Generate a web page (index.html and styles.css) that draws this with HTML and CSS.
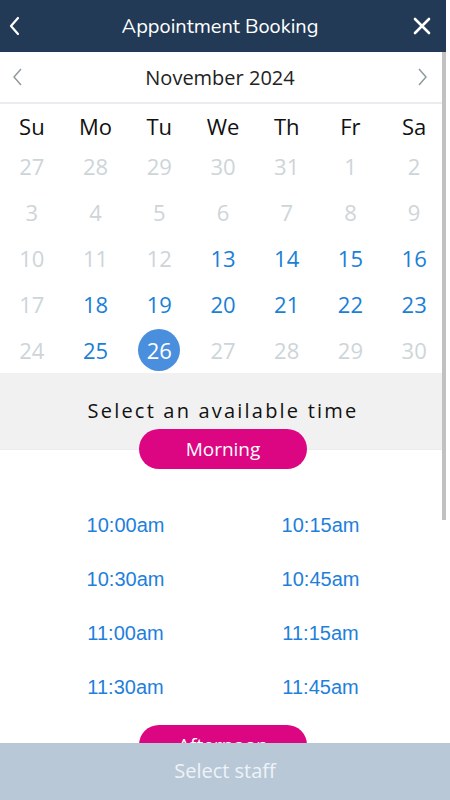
FILE: index.html
```html
<!DOCTYPE html>
<html lang="en">
<head>
    <meta charset="UTF-8">
    <meta name="viewport" content="width=device-width, initial-scale=1.0">
    <title>Appointment Booking</title>
    <link rel="stylesheet" href="styles.css">
</head>
<body>

<div class="app">
    <div class="topbar">
        <svg class="top-icon" width="14" height="20" viewBox="0 0 14 20"><path d="M10 2 L3 10 L10 18" fill="none" stroke="#fff" stroke-width="2.2" stroke-linecap="round" stroke-linejoin="round"/></svg>
        <h2>Appointment Booking</h2>
        <svg class="top-icon" width="20" height="20" viewBox="0 0 20 20"><path d="M3 3 L17 17 M17 3 L3 17" fill="none" stroke="#fff" stroke-width="2.6" stroke-linecap="round"/></svg>
    </div>

    <div class="content">
        <div class="month-bar">
            <svg width="12" height="20" viewBox="0 0 12 20"><path d="M9 2 L2 10 L9 18" fill="none" stroke="#8b969c" stroke-width="1.4"/></svg>
            <span>November 2024</span>
            <svg width="12" height="20" viewBox="0 0 12 20"><path d="M3 2 L10 10 L3 18" fill="none" stroke="#8b969c" stroke-width="1.4"/></svg>
        </div>

        <div class="calendar">
            <div class="weekday">Su</div>
            <div class="weekday">Mo</div>
            <div class="weekday">Tu</div>
            <div class="weekday">We</div>
            <div class="weekday">Th</div>
            <div class="weekday">Fr</div>
            <div class="weekday">Sa</div>

            <div class="date off">27</div>
            <div class="date off">28</div>
            <div class="date off">29</div>
            <div class="date off">30</div>
            <div class="date off">31</div>
            <div class="date off">1</div>
            <div class="date off">2</div>

            <div class="date off">3</div>
            <div class="date off">4</div>
            <div class="date off">5</div>
            <div class="date off">6</div>
            <div class="date off">7</div>
            <div class="date off">8</div>
            <div class="date off">9</div>

            <div class="date off">10</div>
            <div class="date off">11</div>
            <div class="date off">12</div>
            <div class="date">13</div>
            <div class="date">14</div>
            <div class="date">15</div>
            <div class="date">16</div>

            <div class="date off">17</div>
            <div class="date">18</div>
            <div class="date">19</div>
            <div class="date">20</div>
            <div class="date">21</div>
            <div class="date">22</div>
            <div class="date">23</div>

            <div class="date off">24</div>
            <div class="date">25</div>
            <div class="date"><span class="selected">26</span></div>
            <div class="date off">27</div>
            <div class="date off">28</div>
            <div class="date off">29</div>
            <div class="date off">30</div>
        </div>

        <div class="time-head">
            <h3>Select an available time</h3>
            <div class="pill">Morning</div>
        </div>

        <div class="slots">
            <a href="#">10:00am</a>
            <a href="#">10:15am</a>
            <a href="#">10:30am</a>
            <a href="#">10:45am</a>
            <a href="#">11:00am</a>
            <a href="#">11:15am</a>
            <a href="#">11:30am</a>
            <a href="#">11:45am</a>
        </div>

        <div class="pill">Afternoon</div>
    </div>

    <!-- scroll indicator -->
    <div class="scroll-thumb"></div>
</div>

<div class="footer">Select staff</div>

</body>
</html>
```

FILE: styles.css
```css
body {
    margin: 0;
    background-color: #fff;
    font-family: 'Open Sans', 'Liberation Sans', sans-serif;
    overflow: hidden;
}

.app {
    position: relative;
    width: 446px;
    height: 800px;
    display: flex;
    flex-direction: column;
}

/* Top bar */
.topbar {
    height: 52px;
    flex-shrink: 0;
    background-color: #223a55;
    display: flex;
    align-items: center;
    justify-content: space-between;
    padding: 0 14px 0 8px;
}

.topbar h2 {
    margin: 0;
    color: #fff;
    font-family: 'Nunito', 'Lato', 'Open Sans', sans-serif;
    font-weight: 400;
    font-size: 20px;
    padding-left: 6px;
}

.top-icon {
    display: block;
}

/* Scrolling area */
.content {
    flex: 1;
    overflow: hidden;
}

.scroll-thumb {
    position: absolute;
    top: 52px;
    right: 0;
    width: 4px;
    height: 468px;
    background-color: #c1c1c1;
}

.month-bar {
    height: 50px;
    display: flex;
    align-items: center;
    justify-content: space-between;
    padding: 0 18px 0 12px;
    border-bottom: 2px solid #e9edf0;
}

.month-bar svg {
    display: block;
}

.month-bar span {
    font-size: 20px;
    color: #222;
}

/* Calendar */
.calendar {
    display: grid;
    grid-template-columns: repeat(7, 1fr);
    text-align: center;
}

.weekday {
    height: 39px;
    line-height: 44px;
    font-size: 22px;
    color: #111;
}

.date {
    height: 46px;
    display: flex;
    align-items: center;
    justify-content: center;
    font-size: 22px;
    color: #1a7fd6;
}

.date.off {
    color: #cdd5d9;
}

.selected {
    width: 42px;
    height: 42px;
    border-radius: 50%;
    background-color: #4a8fde;
    color: #fff;
    display: flex;
    align-items: center;
    justify-content: center;
}

/* Time picker */
.time-head {
    padding-top: 24px;
    background: linear-gradient(#f1f1f1 76px, #e9edf0 76px, #e9edf0 77px, #fff 77px);
}

.time-head h3 {
    margin: 0;
    text-align: center;
    font-weight: 400;
    font-size: 20px;
    line-height: 28px;
    letter-spacing: 2.2px;
    color: #111;
}

.pill {
    width: 168px;
    height: 40px;
    margin: 4px auto 0;
    border-radius: 20px;
    background-color: #dc0582;
    color: #fff;
    font-size: 19px;
    line-height: 40px;
    text-align: center;
}

.slots {
    width: 390px;
    margin: 29px auto 11px;
    display: grid;
    grid-template-columns: 1fr 1fr;
}

.slots a {
    height: 54px;
    line-height: 54px;
    text-align: center;
    font-family: 'Liberation Sans', Arial, sans-serif;
    font-size: 20px;
    color: #1e80dc;
    text-decoration: none;
}

/* Bottom button */
.footer {
    position: fixed;
    left: 0;
    right: 0;
    bottom: 0;
    height: 57px;
    line-height: 56px;
    background-color: #b8c8d7;
    color: #eef3f8;
    font-size: 20px;
    text-align: center;
}
```
